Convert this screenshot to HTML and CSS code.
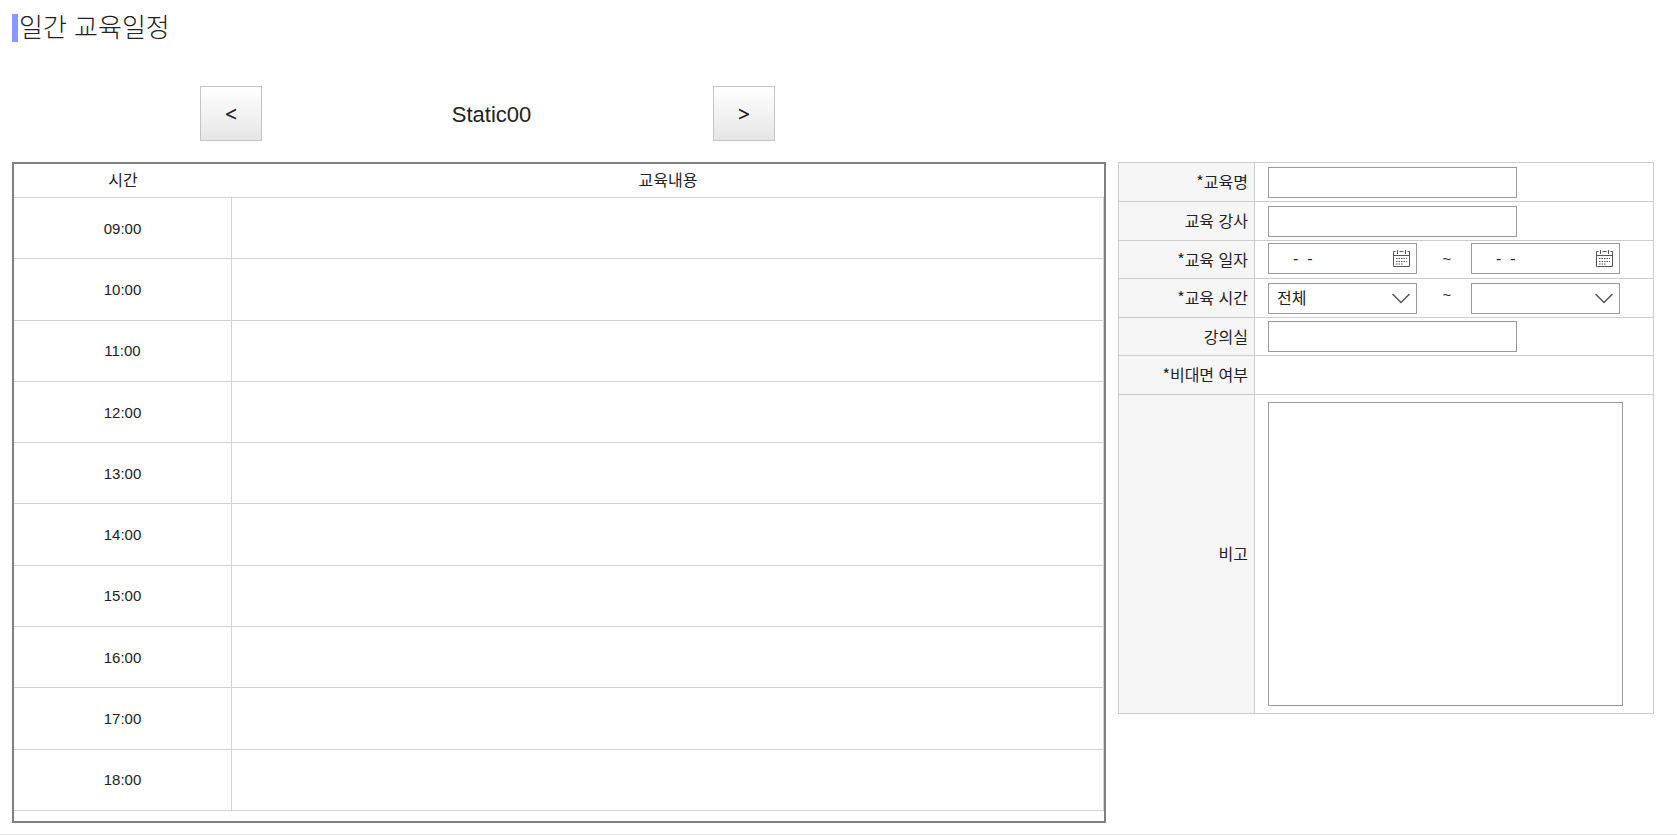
FILE: index.html
```html
<!DOCTYPE html>
<html lang="ko">
<head>
<meta charset="utf-8">
<title>일간 교육일정</title>
<link rel="stylesheet" href="styles.css">
</head>
<body>
<svg class="sprite" aria-hidden="true">
  <symbol id="calendar" viewBox="0 0 17 17">
    <path d="M2.500 1.500H.5v15h16v-15H14.500M6.500 1.500h4M.5 5.500h16" fill="none" stroke="#555"/>
    <path d="M4.500 0v4M12.500 0v4" stroke="#555"/>
    <path d="M3 8.500h11M3 11.500h11M3 14h7" stroke="#555" stroke-dasharray="1.500 1"/>
  </symbol>
</svg>
<main class="page">
  <h1 class="title">일간 교육일정</h1>
  <nav class="day-nav" aria-label="날짜 이동">
    <button class="nav-btn" type="button">&lt;</button>
    <span class="day-label">Static00</span>
    <button class="nav-btn" type="button">&gt;</button>
  </nav>
  <div class="columns">
    <section class="schedule">
      <table class="grid">
        <thead><tr><th class="time">시간</th><th>교육내용</th></tr></thead>
        <tbody>
          <tr><td class="time">09:00</td><td></td></tr>
          <tr><td class="time">10:00</td><td></td></tr>
          <tr><td class="time">11:00</td><td></td></tr>
          <tr><td class="time">12:00</td><td></td></tr>
          <tr><td class="time">13:00</td><td></td></tr>
          <tr><td class="time">14:00</td><td></td></tr>
          <tr><td class="time">15:00</td><td></td></tr>
          <tr><td class="time">16:00</td><td></td></tr>
          <tr><td class="time">17:00</td><td></td></tr>
          <tr><td class="time">18:00</td><td></td></tr>
        </tbody>
      </table>
    </section>
    <form class="form">
      <div class="row"><label class="label" for="name">*교육명</label><div class="field"><input class="box text" id="name" type="text"></div></div>
      <div class="row"><label class="label" for="teacher">교육 강사</label><div class="field"><input class="box text" id="teacher" type="text"></div></div>
      <div class="row short"><label class="label" for="from">*교육 일자</label>
        <div class="field dates">
          <div class="box date"><input class="date-input" id="from" type="text" value="-  -"><button class="cal" type="button" aria-label="시작일 선택"><svg class="cal-icon"><use href="#calendar"/></svg></button></div>
          <span class="tilde">~</span>
          <div class="box date"><input class="date-input" type="text" value="-  -" aria-label="종료일"><button class="cal" type="button" aria-label="종료일 선택"><svg class="cal-icon"><use href="#calendar"/></svg></button></div>
        </div>
      </div>
      <div class="row"><label class="label" for="start">*교육 시간</label>
        <div class="field">
          <div class="pick"><select class="box select" id="start"><option>전체</option></select><svg class="chevron" viewBox="0 0 18 11" aria-hidden="true"><path d="M.5 1 9 9.500 17.500 1" fill="none" stroke="#555" stroke-width="1.500"/></svg></div>
          <span class="tilde high">~</span>
          <div class="pick"><select class="box select" aria-label="종료 시간"><option></option></select><svg class="chevron" viewBox="0 0 18 11" aria-hidden="true"><path d="M.5 1 9 9.500 17.500 1" fill="none" stroke="#555" stroke-width="1.500"/></svg></div>
        </div>
      </div>
      <div class="row short"><label class="label" for="room">강의실</label><div class="field"><input class="box text" id="room" type="text"></div></div>
      <div class="row"><span class="label">*비대면 여부</span><div class="field"></div></div>
      <div class="row tall"><label class="label" for="note">비고</label><div class="field"><textarea class="box note" id="note"></textarea></div></div>
    </form>
  </div>
</main>
</body>
</html>
```
FILE: styles.css
```css
* { box-sizing: border-box; }
body {
  margin: 0;
  background: #fff;
  color: #222;
  font: 15px "Liberation Sans", "Noto Sans CJK KR", sans-serif;
}
.sprite { display: none; }
.page {
  min-height: 100vh;
  padding: 14px 23px 10px 12px;
  border-bottom: 1px solid #e4e4e4;
}
.title {
  margin: 0;
  padding: 1px 0 0 1px;
  border-left: 6px solid #8b98ff;
  font-size: 26px;
  font-weight: 300;
  line-height: 27px;
}
.day-nav {
  display: flex;
  justify-content: space-between;
  align-items: center;
  width: 575px;
  margin: 44px 0 21px 188px;
}
.nav-btn {
  width: 62px;
  height: 55px;
  padding: 0;
  border: 1px solid #c4c4c4;
  background: linear-gradient(#fff, #e6e6e6);
  color: #222;
  font: 500 21px "Noto Sans", sans-serif;
}
.day-label { padding: 2px 0 0 8px; font-size: 22px; }
.columns {
  display: grid;
  grid-template-columns: minmax(0, 1094fr) minmax(480px, 536fr);
  gap: 12px;
  align-items: start;
}
.schedule { padding-bottom: 10px; border: 2px solid #808080; }
.grid {
  width: 100%;
  height: 647px;
  border-collapse: separate;
  border-spacing: 0;
  table-layout: fixed;
}
.grid th, .grid td {
  padding: 0;
  border-bottom: 1px solid #d0d0d0;
  text-align: center;
  font-weight: 400;
}
.grid th { height: 34px; font-size: 16px; line-height: 20px; }
.grid td { border-right: 1px solid #d0d0d0; }
.grid .time { width: 218px; }
.form { border: 1px solid #ccc; }
.row {
  display: grid;
  grid-template-columns: 136px minmax(0, 1fr);
  min-height: 39px;
  border-bottom: 1px solid #ccc;
}
.short { min-height: 38px; }
.row:last-child { border-bottom: 0; }
.label {
  display: flex;
  align-items: center;
  justify-content: flex-end;
  padding: 0 6px 2px 0;
  border-right: 1px solid #ccc;
  background: #f6f6f6;
  font-family: "Noto Sans CJK KR", sans-serif;
  font-size: 16px;
  line-height: 20px;
}
.field { display: flex; align-items: center; padding-left: 13px; }
.dates { align-items: flex-start; padding-top: 2px; }
.box {
  height: 31px;
  margin: 0;
  border: 1px solid #999;
  border-radius: 0;
  background: #fff;
  color: #222;
  font: 16px "Liberation Sans", "Noto Sans CJK KR", sans-serif;
}
.text { width: 249px; }
.date {
  display: flex;
  align-items: center;
  justify-content: space-between;
  width: 149px;
  padding: 0 6px 0 24px;
}
.date-input {
  width: 80px;
  padding: 0;
  border: 0;
  background: none;
  color: #222;
  font: 16px "Liberation Sans", sans-serif;
  white-space: pre;
}
.cal { display: flex; padding: 0; border: 0; background: none; }
.cal-icon { width: 17px; height: 17px; }
.tilde { width: 54px; padding-left: 6px; text-align: center; line-height: 32px; }
.high { padding-bottom: 6px; }
.pick { display: grid; align-items: center; width: 149px; }
.pick > * { grid-area: 1 / 1; }
.select { width: 100%; padding: 0 8px; appearance: none; }
.chevron {
  width: 18px;
  height: 11px;
  margin-right: 7px;
  justify-self: end;
  pointer-events: none;
}
.tall { min-height: 318px; }
.note { width: 355px; height: 304px; resize: none; }
```
